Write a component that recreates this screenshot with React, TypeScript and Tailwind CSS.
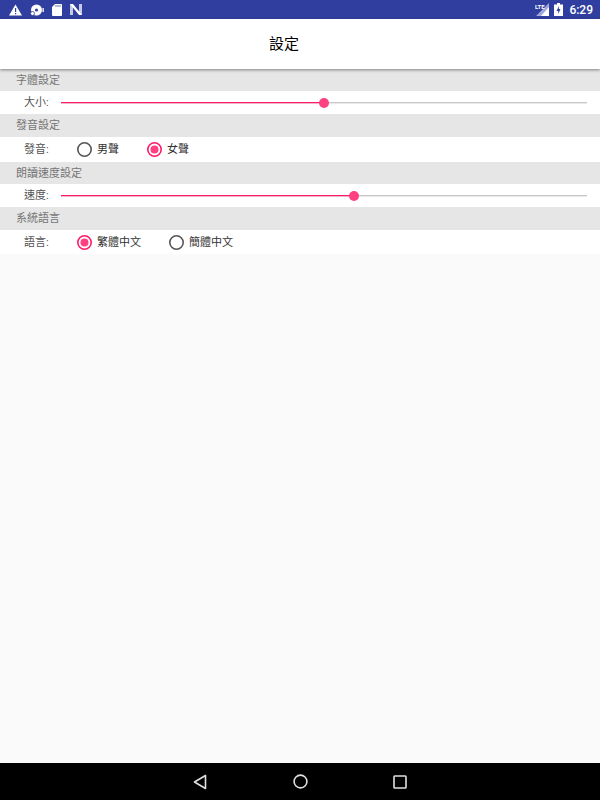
import React from 'react';

const font = "font-['Roboto','Noto_Sans_CJK_TC',sans-serif]";

const SectionHeader = ({ title, height }: { title: string; height: string }) => (
  <div className={`${height} bg-[#e6e6e6] pl-4 pt-[2px] flex items-center text-[11px] text-[#757575]`}>{title}</div>
);

const Slider = ({ percent }: { percent: number }) => (
  <div className="relative flex-1 h-px bg-[#c8c8c8] shadow-[0_1px_0_rgba(200,200,200,0.4)]">
    <div className="h-full bg-[#ff1a6c] shadow-[0_1px_0_rgba(255,26,108,0.25)]" style={{ width: `${percent}%` }} />
    <div
      className="absolute top-[-4px] w-[10px] h-[10px] -ml-[5px] rounded-full bg-[#ff4081]"
      style={{ left: `${percent}%` }}
    />
  </div>
);

const Radio = ({ label, checked, width }: { label: string; checked?: boolean; width: string }) => (
  <div className={`flex items-center gap-[5px] ${width}`}>
    <svg width="15" height="15" viewBox="0 0 15 15">
      <circle cx="7.5" cy="7.5" r="6.7" fill="none" stroke={checked ? '#ff1a6c' : '#555555'} strokeWidth="1.6" />
      {checked && <circle cx="7.5" cy="7.5" r="4" fill="#ff4081" />}
    </svg>
    <span className="text-[11px] text-[#333333] pt-[2px]">{label}</span>
  </div>
);

const Label = ({ text }: { text: string }) => (
  <span className="w-[37px] text-[11px] text-[#555555] shrink-0 pt-[2px]">{text}</span>
);

export default function App() {
  return (
    <div className={`${font} w-[600px] h-[800px] flex flex-col bg-[#fafafa] overflow-hidden`}>
      {/* status bar */}
      <div className="h-[19px] bg-[#303f9f] flex items-center justify-between pl-[9px] pr-[7px] text-white">
        <div className="flex items-center gap-[8px]">
          <svg width="13" height="12" viewBox="0 0 13 12">
            <path d="M6.5 0.5 L13 11.5 H0 Z" fill="#fff" />
            <rect x="6" y="4" width="1.2" height="4" fill="#303f9f" />
            <rect x="6" y="9" width="1.2" height="1.3" fill="#303f9f" />
          </svg>
          <svg width="14" height="12" viewBox="0 0 14 12">
            <circle cx="6.5" cy="6" r="5.5" fill="#fff" />
            <circle cx="6.5" cy="6" r="1.6" fill="#303f9f" />
            <circle cx="2.5" cy="9.5" r="2" fill="#fff" stroke="#303f9f" strokeWidth="0.8" />
            <rect x="12.5" y="4" width="1.3" height="4" fill="#fff" />
          </svg>
          <svg width="10" height="12" viewBox="0 0 10 12">
            <path d="M3 0 H9 a1 1 0 0 1 1 1 V11 a1 1 0 0 1 -1 1 H1 a1 1 0 0 1 -1 -1 V3 Z" fill="#fff" />
            <path d="M4 1 V3 M6 1 V3 M8 1 V3" stroke="#303f9f" strokeWidth="0.7" />
          </svg>
          <svg width="12" height="11" viewBox="0 0 12 11">
            <path d="M0 0 H3 V11 H0 Z M9 0 H12 V11 H9 Z" fill="#c5cae9" />
            <path d="M0 0 H3 L12 11 H9 Z" fill="#fff" />
          </svg>
        </div>
        <div className="flex items-center">
          <svg width="14" height="13" viewBox="0 0 14 13" className="mr-[5px]">
            <path d="M14 0 V13 H1 Z" fill="#9fa8da" />
            <path d="M14 4 V13 H6 Z" fill="#fff" />
            <text x="0" y="6" fontSize="6" fontWeight="700" fill="#fff" fontFamily="Roboto">LTE</text>
          </svg>
          <svg width="9" height="13" viewBox="0 0 9 13" className="mr-[6px]">
            <path d="M3 0 H6 V1.5 H9 V13 H0 V1.5 H3 Z" fill="#fff" />
            <path d="M5 3 L2.5 8 H4.2 V11 L6.5 6 H4.8 Z" fill="#303f9f" />
          </svg>
          <span className="text-[12px] font-medium">6:29</span>
        </div>
      </div>

      {/* action bar */}
      <div className="h-[50px] bg-white flex items-center justify-center pr-8 text-[15px] text-black shadow-[0_1px_3px_rgba(0,0,0,0.45)] z-10">
        設定
      </div>

      <div className="flex-1 flex flex-col">
        <SectionHeader title="字體設定" height="h-[22px]" />
        <div className="h-[23px] bg-white flex items-center pl-6 pr-[13px]">
          <Label text="大小:" />
          <Slider percent={50} />
        </div>
        <SectionHeader title="發音設定" height="h-[23px]" />
        <div className="h-[25px] bg-white flex items-center pl-6">
          <Label text="發音:" />
          <div className="flex items-center ml-4">
            <Radio label="男聲" width="w-[70px]" />
            <Radio label="女聲" checked width="w-[70px]" />
          </div>
        </div>
        <SectionHeader title="朗讀速度設定" height="h-[22px]" />
        <div className="h-[23px] bg-white flex items-center pl-6 pr-[13px]">
          <Label text="速度:" />
          <Slider percent={55.7} />
        </div>
        <SectionHeader title="系統語言" height="h-[23px]" />
        <div className="h-[24px] bg-white flex items-center pl-6">
          <Label text="語言:" />
          <div className="flex items-center ml-4">
            <Radio label="繁體中文" checked width="w-[92px]" />
            <Radio label="簡體中文" width="w-[70px]" />
          </div>
        </div>
      </div>

      {/* nav bar */}
      <div className="h-[37px] bg-black flex items-center justify-center gap-[86px]">
        <svg width="14" height="16" viewBox="0 0 14 16">
          <path d="M12.5 1.5 V14.5 L1.5 8 Z" fill="none" stroke="#e0e0e0" strokeWidth="1.6" strokeLinejoin="round" />
        </svg>
        <svg width="15" height="15" viewBox="0 0 15 15">
          <circle cx="7.5" cy="7.5" r="6.4" fill="none" stroke="#e0e0e0" strokeWidth="1.6" />
        </svg>
        <svg width="14" height="14" viewBox="0 0 14 14" className="-ml-px">
          <rect x="1" y="1" width="12" height="12" rx="0.8" fill="none" stroke="#e0e0e0" strokeWidth="1.6" />
        </svg>
      </div>
    </div>
  );
}
